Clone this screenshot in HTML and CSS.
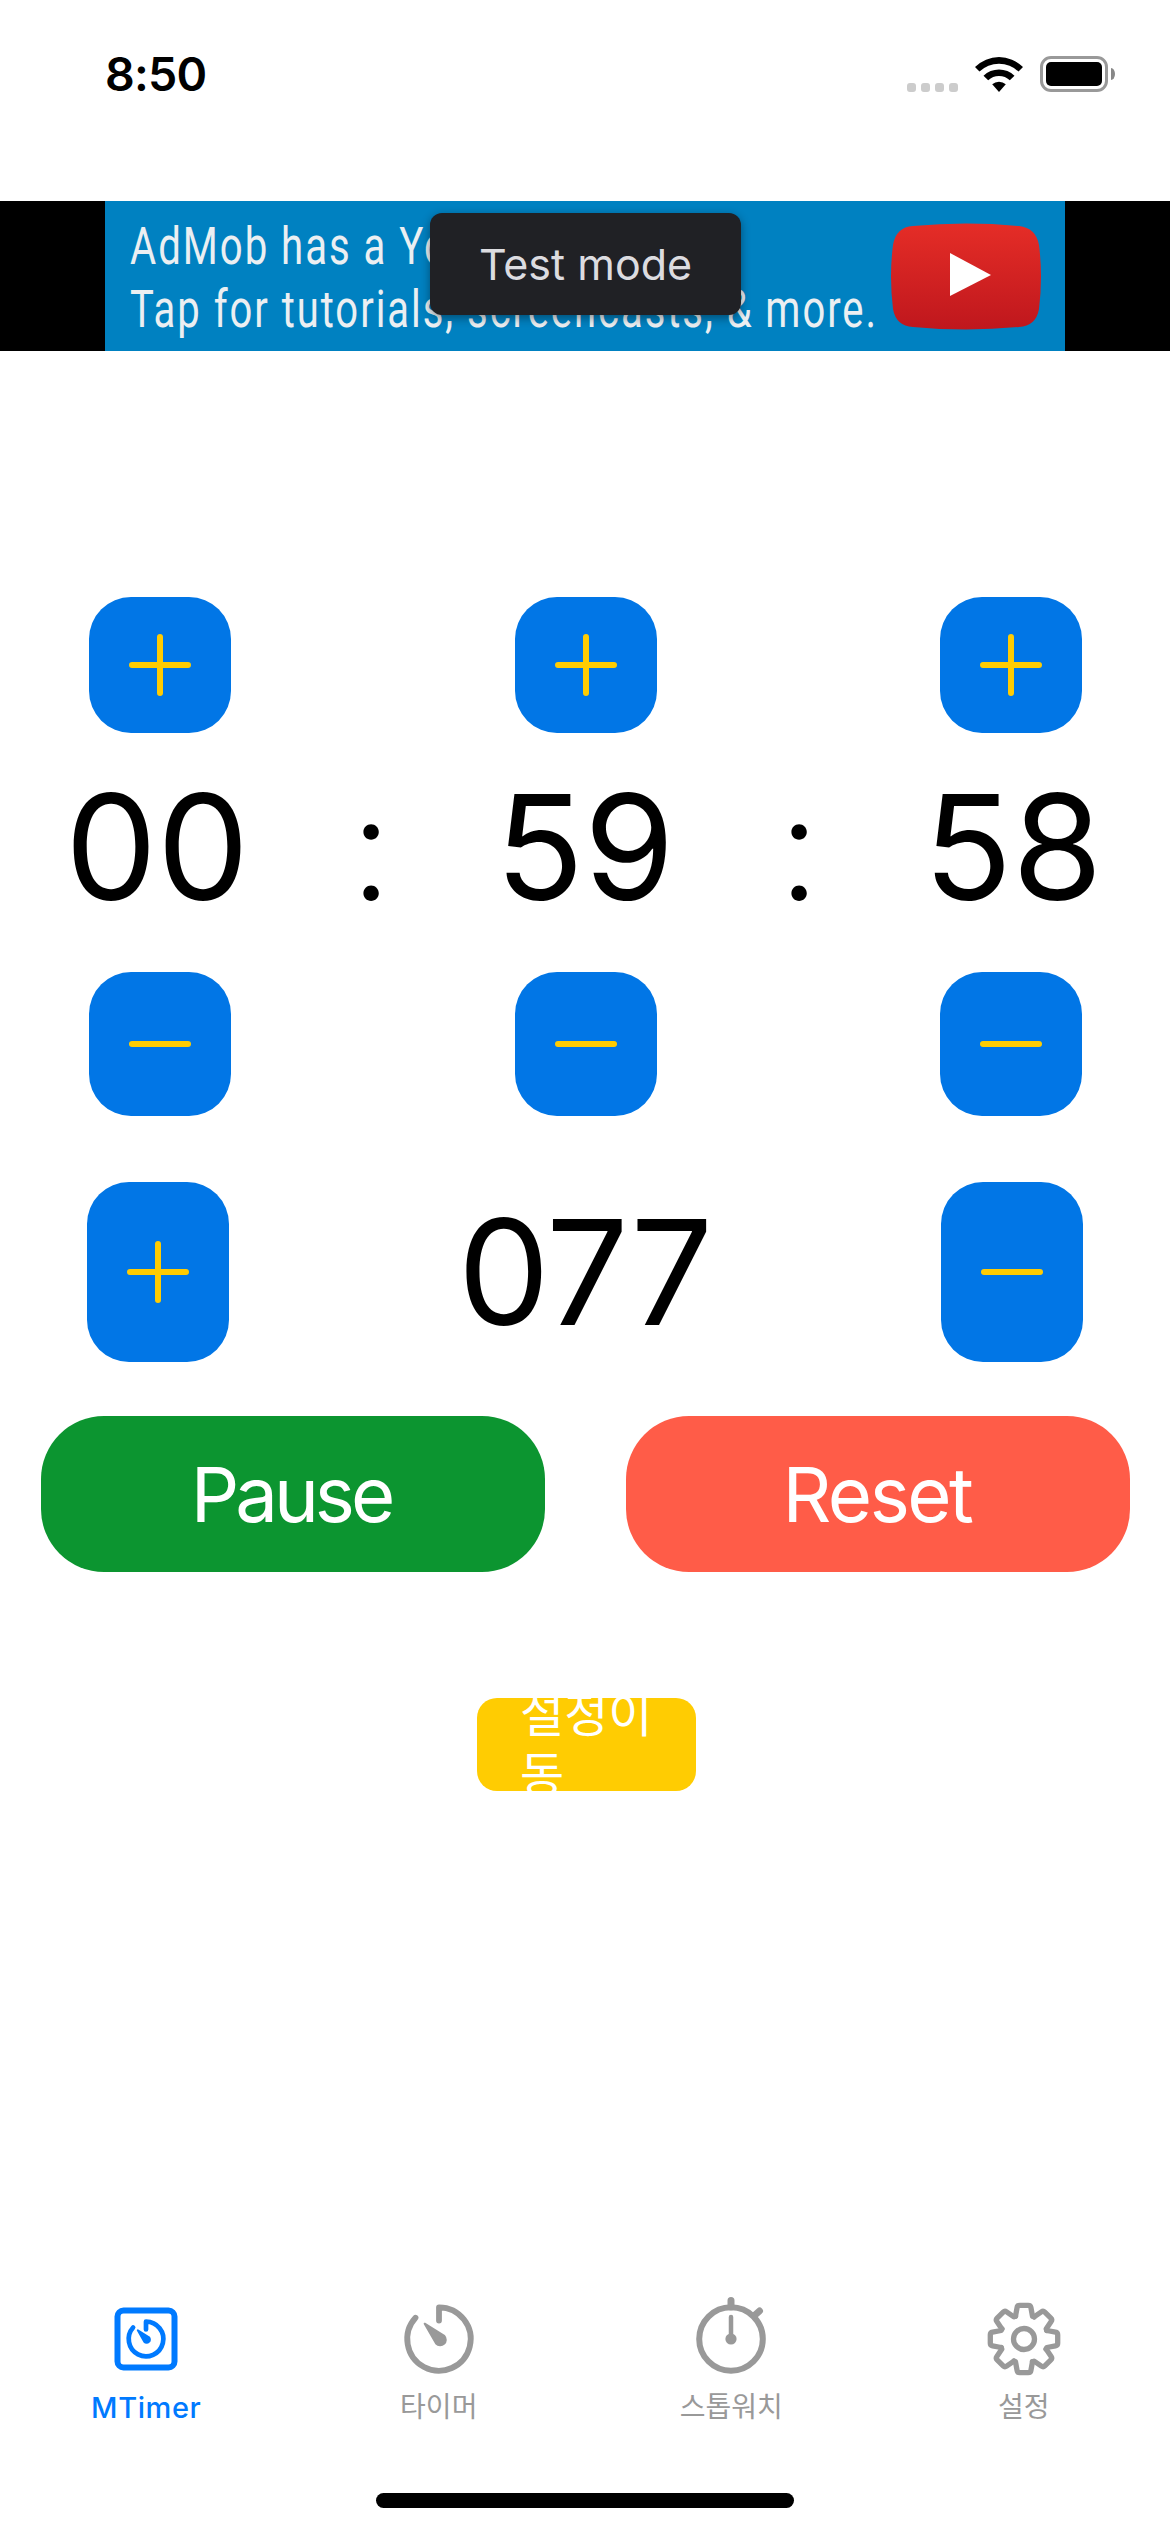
FILE: index.html
```html
<!DOCTYPE html>
<html lang="ko">
<head>
<meta charset="utf-8">
<title>MTimer</title>
<link rel="stylesheet" href="styles.css">
</head>
<body>
<svg class="defs" aria-hidden="true">
  <defs>
    <symbol id="plus" viewBox="0 0 62 62"><path d="M3 31H59M31 3V59" stroke="currentColor" stroke-width="6" stroke-linecap="round"/></symbol>
    <symbol id="minus" viewBox="0 0 62 62"><path d="M3 31H59" stroke="currentColor" stroke-width="6" stroke-linecap="round"/></symbol>
    <path id="tooth" d="M-8.5 -22.8L-6.9 -31.5Q-6.5 -33.7 -4.3 -33.7H4.3Q6.5 -33.7 6.9 -31.5L8.5 -22.8L10.1 -22.1"/>
  </defs>
</svg>
<div class="screen">
  <header class="status">
    <span class="time">8:50</span>
    <div class="indicators">
      <div class="cell"><i></i><i></i><i></i><i></i></div>
      <svg class="wifi" viewBox="0 0 48 36">
        <path d="M0 11A34 34 0 0 1 48 11L43.500 15.600A28 28 0 0 0 4.500 15.600Z"/>
        <path d="M8.500 19.800A22 22 0 0 1 39.500 19.800L34.800 24.300A15.500 15.500 0 0 0 13.200 24.300Z"/>
        <path d="M17.200 28.300A10 10 0 0 1 30.800 28.300L24 36Z"/>
      </svg>
      <div class="battery"><div class="level"></div></div>
      <div class="nub"></div>
    </div>
  </header>

  <section class="ad">
    <svg class="creative" viewBox="0 0 960 150">
      <defs>
        <linearGradient id="red" x1="0" y1="0" x2="0" y2="1"><stop offset="0" stop-color="#e52d27"/><stop offset="1" stop-color="#bf171d"/></linearGradient>
      </defs>
      <text x="25" y="63" textLength="605" lengthAdjust="spacingAndGlyphs">AdMob has a YouTube channel</text>
      <text x="25" y="126" textLength="748" lengthAdjust="spacingAndGlyphs">Tap for tutorials, screencasts, &amp; more.</text>
      <path fill="url(#red)" d="M788 44Q791 26 808 25Q861 20 914 25Q931 27 934 44Q938 75 934 108Q931 125 914 126Q861 131 808 126Q791 125 788 108Q784 75 788 44Z"/>
      <path fill="#fff" d="M845 52L886 74L845 95Z"/>
    </svg>
    <div class="badge">Test mode</div>
  </section>

  <main>
    <div class="row up">
      <button class="step"><svg><use href="#plus"/></svg></button>
      <button class="step"><svg><use href="#plus"/></svg></button>
      <button class="step"><svg><use href="#plus"/></svg></button>
    </div>
    <div class="clock"><span>00</span><span class="colon">:</span><span>59</span><span class="colon">:</span><span>58</span></div>
    <div class="row down">
      <button class="step"><svg><use href="#minus"/></svg></button>
      <button class="step"><svg><use href="#minus"/></svg></button>
      <button class="step"><svg><use href="#minus"/></svg></button>
    </div>
    <div class="row count">
      <button class="step"><svg><use href="#plus"/></svg></button>
      <span class="number">077</span>
      <button class="step"><svg><use href="#minus"/></svg></button>
    </div>
    <div class="actions">
      <button class="pause">Pause</button>
      <button class="reset">Reset</button>
    </div>
    <button class="goto">설정이동</button>
  </main>

  <nav class="tabs">
    <a class="tab active">
      <svg viewBox="-40 -40 80 80"><rect x="-28.500" y="-28.500" width="57" height="57" rx="6"/><g stroke-width="4.700"><path d="M0 -9.500V-17.300A17.300 17.300 0 1 1 -12.900 -11.500"/></g><path class="solid" d="M-8.200 -8.700L3 -1.700A3.100 3.100 0 1 1 -1.700 2.800Z"/></svg>
      <span>MTimer</span>
    </a>
    <a class="tab">
      <svg viewBox="-40 -40 80 80"><path d="M0 -18.500V-31.700A31.700 31.700 0 1 1 -23.500 -21.300" stroke-width="5.800"/><path class="solid" d="M-14.300 -15.300L5.300 -3.100A5.500 5.500 0 1 1 -2.900 4.500Z"/></svg>
      <span>타이머</span>
    </a>
    <a class="tab">
      <svg viewBox="-40 -40 80 80"><circle r="31.800"/><path d="M0 -32V-38.500M24 -24L28.500 -28" stroke-width="7"/><path d="M0 0V-22" stroke-width="4.500"/><circle class="hub" r="5.600"/></svg>
      <span>스톱워치</span>
    </a>
    <a class="tab">
      <svg viewBox="-40 -40 80 80"><g stroke-width="5.300"><use href="#tooth"/><use href="#tooth" transform="rotate(45)"/><use href="#tooth" transform="rotate(90)"/><use href="#tooth" transform="rotate(135)"/><use href="#tooth" transform="rotate(180)"/><use href="#tooth" transform="rotate(225)"/><use href="#tooth" transform="rotate(270)"/><use href="#tooth" transform="rotate(315)"/><circle r="10.500"/></g></svg>
      <span>설정</span>
    </a>
  </nav>
  <div class="home"></div>
</div>
</body>
</html>
```
FILE: styles.css
```css
* { box-sizing: border-box; }
body { margin: 0; background: #fff; font-family: Inter, "Noto Sans CJK KR", sans-serif; color: #000; }
button { border: 0; padding: 0; margin: 0; font: inherit; color: inherit; display: block; }
.defs { display: none; }
.screen { width: 1170px; height: 2532px; display: flex; flex-direction: column; overflow: hidden; }

.status { height: 201px; padding: 0 55px 0 105px; display: flex; justify-content: space-between; align-items: flex-start; }
.time { margin-top: 46px; font-size: 46.5px; font-weight: 600; line-height: 56px; letter-spacing: -.8px; }
.indicators { display: flex; align-items: center; margin-top: 55px; height: 38px; }
.cell { display: flex; gap: 5px; margin: 26px 17px 0 0; }
.cell i { width: 9px; height: 9px; border-radius: 3px; background: #ccc; }
.wifi { width: 48px; height: 36px; margin: 0 17px 1px 0; }
.battery { width: 68px; height: 36px; border: 3px solid #999; border-radius: 11px; padding: 3px; }
.level { height: 24px; border-radius: 5px; background: #000; }
.nub { width: 4px; height: 12px; margin-left: 3px; border-radius: 0 4px 4px 0 / 0 6px 6px 0; background: #888; }

.ad { position: relative; height: 150px; padding: 0 105px; background: #000; }
.creative { display: block; width: 960px; height: 150px; background: #0081c1; }
.creative text { font-family: Roboto, sans-serif; font-size: 51px; letter-spacing: 2.5px; fill: #ebeff2; }
.badge { position: absolute; left: 430px; top: 12px; width: 311px; height: 102px; border-radius: 12px; background: #202125; color: #dcdce0; font-size: 43px; line-height: 103px; text-align: center; box-shadow: 0 3px 10px rgba(0, 0, 0, .4); }

main { height: 1919px; padding-top: 246px; }
.row { display: flex; justify-content: space-between; padding: 0 88px 0 89px; }
.step { width: 142px; height: 136px; border-radius: 42px; background: #0176e6; color: #ffcc02; display: flex; align-items: center; justify-content: center; }
.step svg { width: 62px; height: 62px; }
.clock { display: grid; grid-template-columns: repeat(5, 214px); justify-content: center; height: 239px; text-align: center; font-size: 146px; line-height: 176px; padding-top: 26px; }
.colon { font-weight: 300; }
.down .step { height: 144px; }
.count { margin-top: 66px; padding: 0 87px; align-items: center; }
.count .step { height: 180px; }
.number { font-size: 146px; line-height: 180px; letter-spacing: -1px; }
.actions { display: flex; justify-content: space-between; padding: 0 40px 0 41px; margin-top: 54px; }
.actions button { width: 504px; height: 156px; border-radius: 63px; color: #fff; font-size: 76px; line-height: 156px; text-align: center; }
.actions .pause { background: #0c9530; letter-spacing: -4px; text-indent: -4px; }
.actions .reset { background: #ff5c48; letter-spacing: -2.5px; text-indent: -2px; }
.goto { width: 219px; height: 93px; margin: 126px 0 0 477px; padding: 0 38px 7px 43px; border-radius: 20px; background: #ffcc02; color: #fff; overflow: hidden; display: flex; align-items: center; text-align: left; word-break: break-all; font: 400 48px/60px "Noto Sans CJK KR", sans-serif; }

.tabs { height: 215px; display: grid; grid-template-columns: repeat(4, 1fr); padding-top: 29px; }
.tab { display: flex; flex-direction: column; align-items: center; color: #999; font-size: 28px; line-height: 40px; }
.tab svg { width: 80px; height: 80px; overflow: visible; fill: none; stroke: currentColor; stroke-width: 6; stroke-linecap: round; stroke-linejoin: round; }
.tab .solid { fill: currentColor; stroke-width: 2; }
.tab .hub { fill: currentColor; stroke: none; }
.tab span { margin-top: 8px; }
.active { color: #007aff; font-size: 29px; font-weight: 500; letter-spacing: .6px; }
.active span { padding-top: 1px; }
.home { width: 418px; height: 15px; border-radius: 8px; background: #000; margin: 8px auto 0; }
```
